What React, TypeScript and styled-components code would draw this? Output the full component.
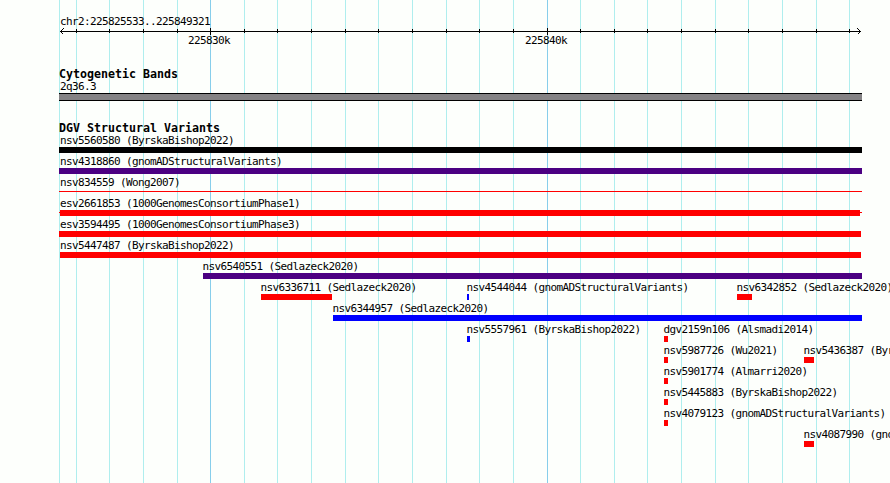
import React from "react";
import styled, { createGlobalStyle } from "styled-components";

interface Variant {
  label: string;
  start: number;
  end: number;
  color: string;
  kind?: "line" | "whisker";
}

const RED = "#ff0000";
const BLUE = "#0000ff";
const INDIGO = "#4b0082";
const LEFT = 59;

const gridLines = [
  59, 76, 109, 143, 177, 210, 244, 277, 311, 345, 378, 412, 446, 479, 513, 547,
  580, 614, 647, 681, 715, 748, 782, 816, 849,
];
const majorLines = [210, 547];

const rows: Variant[][] = [
  [{ label: "nsv5560580 (ByrskaBishop2022)", start: 59, end: 862, color: "#000" }],
  [{ label: "nsv4318860 (gnomADStructuralVariants)", start: 59, end: 862, color: INDIGO }],
  [{ label: "nsv834559 (Wong2007)", start: 59, end: 862, color: RED, kind: "line" }],
  [{ label: "esv2661853 (1000GenomesConsortiumPhase1)", start: 59, end: 862, color: RED, kind: "whisker" }],
  [{ label: "esv3594495 (1000GenomesConsortiumPhase3)", start: 59, end: 861, color: RED }],
  [{ label: "nsv5447487 (ByrskaBishop2022)", start: 60, end: 861, color: RED }],
  [{ label: "nsv6540551 (Sedlazeck2020)", start: 203, end: 862, color: INDIGO }],
  [
    { label: "nsv6336711 (Sedlazeck2020)", start: 261, end: 332, color: RED },
    { label: "nsv4544044 (gnomADStructuralVariants)", start: 467, end: 469, color: BLUE },
    { label: "nsv6342852 (Sedlazeck2020)", start: 737, end: 752, color: RED },
  ],
  [{ label: "nsv6344957 (Sedlazeck2020)", start: 333, end: 862, color: BLUE }],
  [
    { label: "nsv5557961 (ByrskaBishop2022)", start: 467, end: 470, color: BLUE },
    { label: "dgv2159n106 (Alsmadi2014)", start: 664, end: 668, color: RED },
  ],
  [
    { label: "nsv5987726 (Wu2021)", start: 664, end: 668, color: RED },
    { label: "nsv5436387 (ByrskaBishop2022)", start: 804, end: 814, color: RED },
  ],
  [{ label: "nsv5901774 (Almarri2020)", start: 664, end: 668, color: RED }],
  [{ label: "nsv5445883 (ByrskaBishop2022)", start: 664, end: 668, color: RED }],
  [{ label: "nsv4079123 (gnomADStructuralVariants)", start: 664, end: 668, color: RED }],
  [{ label: "nsv4087990 (gnomADStructuralVariants)", start: 804, end: 814, color: RED }],
];

const GlobalStyle = createGlobalStyle`
  body {
    margin: 0;
    background: #fdfffc;
  }
`;
const Panel = styled.main`
  position: relative;
  box-sizing: border-box;
  width: 890px;
  height: 483px;
  padding: 14px 0 0 ${LEFT}px;
  overflow: hidden;
  background: #fdfffc;
  color: #000;
  font-family: "DejaVu Sans Mono", monospace;
`;
const GridLayer = styled.svg`
  position: absolute;
  top: 0;
  left: 0;
`;
const Content = styled.div`
  position: relative;
  display: flex;
  flex-direction: column;
`;
const Label = styled.div<{ $indent?: number }>`
  height: 14px;
  margin-left: ${({ $indent = 1 }) => $indent}px;
  font-size: 11px;
  letter-spacing: -0.622px;
  line-height: 16px;
  white-space: nowrap;
`;
const Axis = styled.svg`
  display: block;
  margin: 0 0 -3px -1px;
`;
const ScaleLabels = styled.div`
  display: flex;
  gap: 294px;
  padding-left: 128px;
`;
const Track = styled.section<{ $gap: number }>`
  margin-top: ${({ $gap }) => $gap}px;
`;
const TrackTitle = styled.h2`
  height: 12px;
  margin: 0;
  font-size: 11.63px;
  font-weight: 700;
  line-height: 14px;
  white-space: nowrap;
`;
const Band = styled.div`
  box-sizing: border-box;
  width: 803px;
  height: 8px;
  border: solid #000;
  border-width: 1px 0;
  background: #848284;
`;
const Row = styled.div`
  display: flex;
  height: 21px;
`;
const Feature = styled.div<{ $offset: number; $width: number }>`
  flex: none;
  width: ${({ $width }) => $width}px;
  margin-left: ${({ $offset }) => $offset}px;
`;
const Bar = styled.div<{ $color: string }>`
  height: 6px;
  background: ${({ $color }) => $color};
`;
const Hairline = styled.div<{ $color: string }>`
  height: 1px;
  margin-top: 2px;
  background: ${({ $color }) => $color};
`;
const WhiskerBar = styled(Bar)`
  margin: 0 2px 0 1px;
`;
const Whisker = styled.div<{ $color: string }>`
  height: 6px;
  background: linear-gradient(${({ $color }) => $color}, ${({ $color }) => $color})
    0 2px / 100% 1px no-repeat;
`;

const isMajor = (x: number) => majorLines.includes(x);

const labelIndent = (start: number) => {
  if (start === LEFT) return 1;
  return start === LEFT + 1 ? 0 : -0.6;
};

const Ruler: React.FC = () => (
  <Axis width="804" height="8" shapeRendering="crispEdges">
    <g transform="translate(-58 -28)">
      <rect x="60" y="31" width="801" height="1" />
      {gridLines.slice(1).map((x) => (
        <rect
          key={x}
          x={x}
          y={isMajor(x) ? 28 : 29}
          width="1"
          height={isMajor(x) ? 7 : 4}
        />
      ))}
      <path
        d="M63.5 28.5 60.5 31.5 63.5 34.5M857.5 28.5 860.5 31.5 857.5 34.5"
        fill="none"
        stroke="#000"
      />
    </g>
  </Axis>
);

const Glyph: React.FC<{ variant: Variant }> = ({ variant }) => {
  if (variant.kind === "line") return <Hairline $color={variant.color} />;
  if (variant.kind === "whisker") {
    return (
      <Whisker $color={variant.color}>
        <WhiskerBar $color={variant.color} />
      </Whisker>
    );
  }
  return <Bar $color={variant.color} />;
};

const VariantRow: React.FC<{ variants: Variant[] }> = ({ variants }) => (
  <Row>
    {variants.map((v, i) => (
      <Feature
        key={v.label}
        $offset={v.start - (i ? variants[i - 1].end : LEFT)}
        $width={v.end - v.start}
      >
        <Label $indent={labelIndent(v.start)}>{v.label}</Label>
        <Glyph variant={v} />
      </Feature>
    ))}
  </Row>
);

const App: React.FC = () => (
  <>
    <GlobalStyle />
    <Panel>
      <GridLayer width="890" height="483" shapeRendering="crispEdges">
        {gridLines.map((x) => (
          <rect
            key={x}
            x={x}
            y="0"
            width="1"
            height="483"
            fill={isMajor(x) ? "#87ceeb" : "#afeeee"}
          />
        ))}
      </GridLayer>
      <Content>
        <Label>chr2:225825533..225849321</Label>
        <Ruler />
        <ScaleLabels>
          <Label>225830k</Label>
          <Label>225840k</Label>
        </ScaleLabels>
        <Track $gap={20}>
          <TrackTitle>Cytogenetic Bands</TrackTitle>
          <Label>2q36.3</Label>
          <Band />
        </Track>
        <Track $gap={20}>
          <TrackTitle>DGV Structural Variants</TrackTitle>
          {rows.map((variants) => (
            <VariantRow key={variants[0].label} variants={variants} />
          ))}
        </Track>
      </Content>
    </Panel>
  </>
);

export default App;
